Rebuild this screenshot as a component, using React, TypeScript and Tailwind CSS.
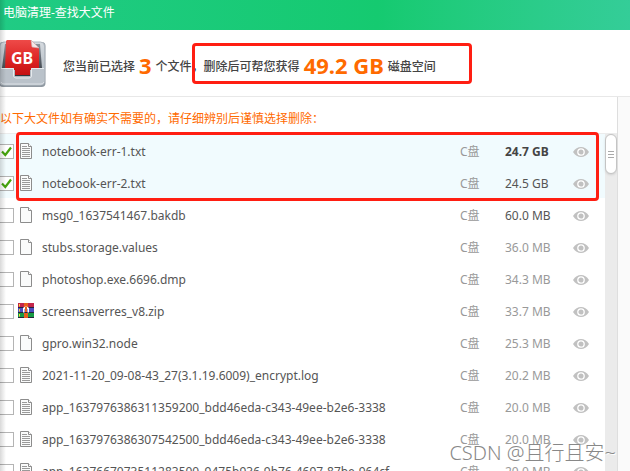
import { useState } from "react";

type FileKind = "text" | "blank" | "zip";

interface FileRow {
  name: string;
  size: string;
  kind: FileKind;
  tone: "bold" | "dark" | "light";
}

const files: FileRow[] = [
  { name: "notebook-err-1.txt", size: "24.7 GB", kind: "text", tone: "bold" },
  { name: "notebook-err-2.txt", size: "24.5 GB", kind: "text", tone: "dark" },
  { name: "msg0_1637541467.bakdb", size: "60.0 MB", kind: "blank", tone: "dark" },
  { name: "stubs.storage.values", size: "36.0 MB", kind: "blank", tone: "light" },
  { name: "photoshop.exe.6696.dmp", size: "34.3 MB", kind: "blank", tone: "light" },
  { name: "screensaverres_v8.zip", size: "33.7 MB", kind: "zip", tone: "light" },
  { name: "gpro.win32.node", size: "25.3 MB", kind: "blank", tone: "light" },
  { name: "2021-11-20_09-08-43_27(3.1.19.6009)_encrypt.log", size: "20.2 MB", kind: "text", tone: "light" },
  { name: "app_1637976386311359200_bdd46eda-c343-49ee-b2e6-3338", size: "20.0 MB", kind: "text", tone: "light" },
  { name: "app_1637976386307542500_bdd46eda-c343-49ee-b2e6-3338", size: "20.0 MB", kind: "text", tone: "light" },
  { name: "app_1637667073511283500_9475b936-9b76-4697-87be-964cf", size: "20.0 MB", kind: "text", tone: "light" },
];

const sizeTone = {
  bold: "font-bold text-[#444]",
  dark: "text-[#555]",
  light: "text-[#999]",
};

function DriveLogo() {
  return (
    <svg width="46" height="50" viewBox="0 0 46 50" className="shrink-0" aria-hidden="true">
      <defs>
        <linearGradient id="tray" x1="0" y1="0" x2="0" y2="1">
          <stop offset="0" stopColor="#d6dbe0" />
          <stop offset="1" stopColor="#a4adb6" />
        </linearGradient>
        <linearGradient id="sheet" x1="0" y1="0" x2="0" y2="1">
          <stop offset="0" stopColor="#ee4a48" />
          <stop offset="0.6" stopColor="#dc2222" />
          <stop offset="1" stopColor="#c41012" />
        </linearGradient>
        <linearGradient id="cavity" x1="0" y1="0" x2="0" y2="1">
          <stop offset="0" stopColor="#8a929b" />
          <stop offset="1" stopColor="#30353b" />
        </linearGradient>
      </defs>
      <rect x="-1" y="4" width="46.5" height="45" rx="4" fill="#8f98a1" />
      <rect x="0" y="4" width="44.5" height="43" rx="4" fill="url(#tray)" stroke="#b0b8c0" />
      <path d="M5 6H40L42 30H30V38H15V30H2Z" fill="url(#cavity)" />
      <path d="M7 2H31L39 10V32H30V37H15V32H5L6 3Z" fill="url(#sheet)" />
      <path d="M31 2L39 10L32 9Z" fill="#f4e9e9" stroke="#cfb4b4" strokeWidth="0.6" />
      <path d="M1 30H14V37Q14 39 16 39H29Q31 39 31 37V30H44V44Q44 47 41 47H3Q0 47 0 44Z" fill="#bac2ca" />
      <path d="M1 30.5H13.5V38Q14 40 16 40H29Q31.5 40 31.5 38V30.5H44" fill="none" stroke="#e7ebee" />
      <path d="M1 44Q2 46 4 46H41Q43 46 44 44" fill="none" stroke="#dce1e6" />
      <text x="22" y="26" textAnchor="middle" fontFamily="Noto Sans, sans-serif" fontSize="16" fontWeight="700" fill="#fff">
        GB
      </text>
    </svg>
  );
}

function FileIcon({ kind }: { kind: FileKind }) {
  if (kind === "zip") {
    return (
      <svg width="16" height="16" viewBox="0 0 16 16" aria-hidden="true">
        <rect y="0" width="16" height="5" fill="#c3264b" />
        <rect y="5" width="16" height="5" fill="#4a4fc0" />
        <rect y="10" width="16" height="5" fill="#169a43" />
        <path d="M0 4.5H16M0 9.5H16M0 14.5H16" stroke="#27213c" />
        <path d="M1.5 1V3.5M1.5 6V8.5M1.5 11V13.5" stroke="#f7d33c" />
        <rect x="6" y="0" width="4" height="4" fill="#e8601c" />
        <rect x="6" y="10" width="4" height="5" fill="#e8601c" />
        <path d="M5 9.5V5Q6 3.5 8 3.5Q10 3.5 11 5V9.5H9.5V6H6.5V9.5Z" fill="#fff" />
        <rect x="7" y="4" width="2" height="5" fill="#e8601c" />
      </svg>
    );
  }
  return (
    <svg width="16" height="18" viewBox="0 0 16 18" aria-hidden="true">
      <path d="M2.5 1.5H10.5L13.5 4.5V16.5H2.5Z" fill="#fafbfb" stroke="#8c8c8c" />
      <path d="M10.5 1.5V4.5H13.5" fill="#fff" stroke="#8c8c8c" />
      {kind === "text" && (
        <path d="M4 4.5H9M4 6.5H12M4 8.5H12M4 10.5H12M4 12.5H12M4 14.5H12" stroke="#9a9a9a" />
      )}
    </svg>
  );
}

function EyeIcon() {
  return (
    <svg width="16" height="12" viewBox="0 0 16 12" aria-hidden="true">
      <path d="M0 6C2 2.5 5 1 8 1S14 2.5 16 6C14 9.5 11 11 8 11S2 9.5 0 6Z" fill="#c1c1c1" />
      <circle cx="8" cy="6" r="3.2" fill="#c1c1c1" stroke="#fff" strokeWidth="1.3" />
    </svg>
  );
}

function Row({ file, index, checked, onToggle }: { file: FileRow; index: number; checked: boolean; onToggle: () => void }) {
  const id = `file-${index}`;
  return (
    <li className={`flex h-8 shrink-0 items-center pt-1 ${checked ? "bg-[#f1fbfe]" : ""}`}>
      <span className="-ml-px mr-1 grid shrink-0 pb-0.5">
        <input
          id={id}
          type="checkbox"
          checked={checked}
          onChange={onToggle}
          className="col-start-1 row-start-1 size-[15px] appearance-none border border-[#b4b4b4] bg-white"
        />
        {checked && (
          <svg width="15" height="15" viewBox="0 0 15 15" className="pointer-events-none col-start-1 row-start-1" aria-hidden="true">
            <path d="M3 7.5L6.3 11L12 3.5" fill="none" stroke="#46a30d" strokeWidth="2.2" />
          </svg>
        )}
      </span>
      <span className="mr-2 flex w-4 shrink-0 justify-center pb-0.5">
        <FileIcon kind={file.kind} />
      </span>
      <label htmlFor={id} className="min-w-0 flex-1 truncate text-[#555]">
        {file.name}
      </label>
      <span className="w-[45px] shrink-0 text-[#999]">C盘</span>
      <span className={`w-[68px] shrink-0 ${sizeTone[file.tone]}`}>{file.size}</span>
      <button type="button" aria-label={`查看 ${file.name}`} className="mr-4 shrink-0">
        <EyeIcon />
      </button>
    </li>
  );
}

export default function App() {
  const [selected, setSelected] = useState<number[]>([0, 1]);
  const toggle = (i: number) =>
    setSelected((s) => (s.includes(i) ? s.filter((n) => n !== i) : [...s, i]));

  return (
    <div className="relative flex h-screen flex-col overflow-hidden bg-white font-['Noto_Sans','Noto_Sans_CJK_SC',sans-serif] text-xs">
      <header className="flex h-[30px] shrink-0 items-center bg-linear-to-r from-[#20cb84] via-[#15ca70] via-60% to-[#34cd98] px-[3px] pb-1">
        <h1 className="text-white">电脑清理-查找大文件</h1>
      </header>

      <section className="flex h-[67px] shrink-0 items-center border-b border-[#e8e8e8]">
        <DriveLogo />
        <p className="flex items-center whitespace-nowrap pl-[17px] pt-1 font-medium text-[#444]">
          <span className="pt-1">您当前已选择</span>
          <strong className="mx-1 text-[22px] leading-6 text-[#ff6a00]">3</strong>
          <span className="pt-1">个文件，删除后可帮您获得</span>
          <strong className="mx-1 text-[22px] leading-6 text-[#ff6a00]">49.2 GB</strong>
          <span className="pt-1">磁盘空间</span>
        </p>
      </section>

      <div className="flex min-h-0 flex-1">
        <main className="flex min-w-0 flex-1 flex-col">
          <p className="flex h-[37px] shrink-0 items-center border-b border-[#ececec] pt-2 text-[#ff6a00]">
            以下大文件如有确实不需要的，请仔细辨别后谨慎选择删除：
          </p>
          <div className="flex min-h-0 flex-1">
            <ul className="flex min-w-0 flex-1 flex-col overflow-hidden">
              {files.map((file, i) => (
                <Row key={file.name} file={file} index={i} checked={selected.includes(i)} onToggle={() => toggle(i)} />
              ))}
            </ul>
            <div className="w-3 shrink-0 bg-[#ebebeb]">
              <div className="flex h-10 flex-col items-center justify-center gap-0.5 rounded-md border border-[#c4c4c4] bg-white shadow-sm">
                <i className="h-px w-1.5 bg-[#aaa]" />
                <i className="h-px w-1.5 bg-[#aaa]" />
                <i className="h-px w-1.5 bg-[#aaa]" />
              </div>
            </div>
          </div>
        </main>
        <aside className="w-[13px] shrink-0 border-l border-[#dedede] bg-[#fafafa]" />
      </div>

      <div className="pointer-events-none absolute inset-y-0 left-0 w-1.5 bg-linear-to-r from-black/15 to-transparent" />
      <div className="pointer-events-none absolute left-48 top-[43px] h-[41px] w-[280px] rounded-sm border-3 border-[#ff1e12]" />
      <div className="pointer-events-none absolute left-4 right-[31px] top-[132px] h-[69px] rounded-sm border-3 border-[#ff1e12]" />
      <p className="pointer-events-none absolute bottom-1 right-3.5 whitespace-nowrap text-xl leading-7 font-light text-[#888] [text-shadow:1px_1px_0_#fff]">
        CSDN @且行且安~
      </p>
    </div>
  );
}
